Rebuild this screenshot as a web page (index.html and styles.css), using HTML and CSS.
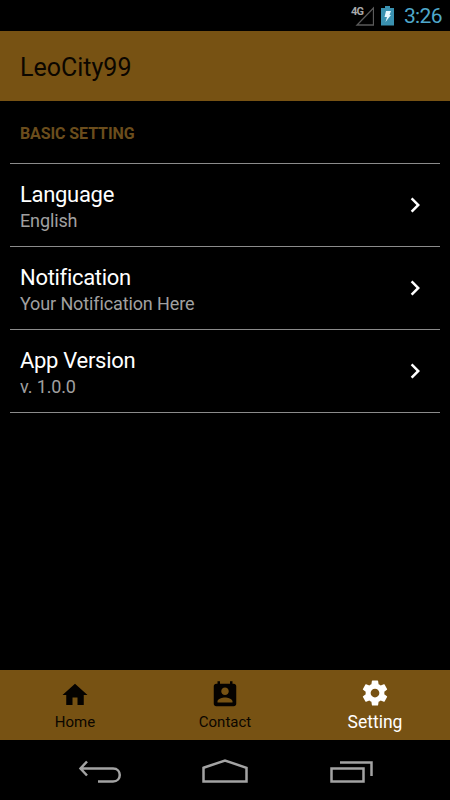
FILE: index.html
```html
<!DOCTYPE html>
<html lang="en">
<head>
<meta charset="utf-8">
<title>LeoCity99</title>
<link rel="stylesheet" href="styles.css">
</head>
<body>
<div class="phone">
  <div class="status">
    <svg class="signal" width="24" height="24" viewBox="0 0 24 24"><path d="M23.500 4v17H7z" fill="none" stroke="#5a5a5a" stroke-width="1.300"/><text x="1" y="10.500" class="net">4G</text></svg>
    <svg class="battery" width="13" height="20" viewBox="0 0 13 20"><path d="M4 0h5v2h4v17.500H0V2h4z" fill="#3a91b0"/><path d="M5 5h5L8.500 9H10l-5.500 7 1.500-5H3.500z" fill="#e8f8ff"/></svg>
    <span class="clock">3:26</span>
  </div>
  <header class="bar"><h1>LeoCity99</h1></header>
  <main>
    <h2>BASIC SETTING</h2>
    <div class="row"><div><p class="title">Language</p><p class="sub">English</p></div><svg width="30" height="30" viewBox="0 0 24 24"><path d="M10 6 8.590 7.410 13.170 12l-4.580 4.590L10 18l6-6z"/></svg></div>
    <div class="row"><div><p class="title">Notification</p><p class="sub">Your Notification Here</p></div><svg width="30" height="30" viewBox="0 0 24 24"><path d="M10 6 8.590 7.410 13.170 12l-4.580 4.590L10 18l6-6z"/></svg></div>
    <div class="row"><div><p class="title">App Version</p><p class="sub">v. 1.0.0</p></div><svg width="30" height="30" viewBox="0 0 24 24"><path d="M10 6 8.590 7.410 13.170 12l-4.580 4.590L10 18l6-6z"/></svg></div>
  </main>
  <nav class="tabs">
    <div class="tab"><svg width="30" height="30" viewBox="0 0 24 24"><path d="M10 20v-6h4v6h5v-8h3L12 3 2 12h3v8z"/></svg><span>Home</span></div>
    <div class="tab"><svg width="30" height="30" viewBox="0 0 24 24"><path d="M19 3h-1V1h-2v2H8V1H6v2H5c-1.110 0-2 .9-2 2v14c0 1.100.89 2 2 2h14c1.100 0 2-.9 2-2V5c0-1.100-.9-2-2-2zm-7 3c1.660 0 3 1.340 3 3s-1.340 3-3 3-3-1.340-3-3 1.340-3 3-3zm6 12H6v-1c0-2 4-3.100 6-3.100s6 1.100 6 3.100v1z"/></svg><span>Contact</span></div>
    <div class="tab active"><svg width="30" height="30" viewBox="0 0 24 24"><path d="M19.430 12.980c.04-.32.07-.64.07-.98s-.03-.66-.07-.98l2.110-1.650c.19-.15.24-.42.12-.64l-2-3.460c-.12-.22-.39-.3-.61-.22l-2.490 1c-.52-.4-1.080-.73-1.690-.98l-.38-2.650C14.460 2.180 14.250 2 14 2h-4c-.25 0-.46.18-.49.42l-.38 2.650c-.61.25-1.170.59-1.690.98l-2.490-1c-.23-.09-.49 0-.61.22l-2 3.460c-.13.22-.07.49.12.64l2.110 1.650c-.04.32-.07.65-.07.98s.03.66.07.98l-2.110 1.650c-.19.15-.24.42-.12.64l2 3.460c.12.22.39.3.61.22l2.490-1c.52.4 1.080.73 1.690.98l.38 2.650c.03.24.24.42.49.42h4c.25 0 .46-.18.49-.42l.38-2.650c.61-.25 1.170-.59 1.690-.98l2.490 1c.23.09.49 0 .61-.22l2-3.460c.12-.22.07-.49-.12-.64zM12 15.500c-1.930 0-3.500-1.570-3.500-3.500s1.570-3.500 3.500-3.500 3.500 1.570 3.500 3.500-1.570 3.500-3.500 3.500z"/></svg><span>Setting</span></div>
  </nav>
  <div class="keys">
    <svg width="50" height="30" viewBox="0 0 50 30"><path d="M5.500 13.500H38c9 0 9 13 0 13H23M12 6.500 5.500 13.500l6.500 7"/></svg>
    <svg width="50" height="30" viewBox="0 0 50 30"><path d="M3.500 12.800 25 5.500l21.500 7.300v13.700H3.500z"/></svg>
    <svg width="50" height="30" viewBox="0 0 50 30"><path d="M6.500 13.500h32v13h-32zM15 7.500h31.500V21"/></svg>
  </div>
</div>
</body>
</html>
```
FILE: styles.css
```css
* { box-sizing: border-box; }
body { margin: 0; background: #000; font-family: Roboto, sans-serif; }
h1, h2, p { margin: 0; font-weight: 400; }
.phone { width: 450px; height: 800px; display: flex; flex-direction: column; background: #000; }
.status { height: 31px; display: flex; justify-content: flex-end; align-items: center; padding-right: 8px; }
.signal { margin-right: 7px; }
.net { font-size: 11px; font-weight: 700; fill: #aaa; font-family: Roboto, sans-serif; letter-spacing: -0.9px; }
.battery { margin-right: 9.5px; }
.clock { font-size: 21px; line-height: 31px; letter-spacing: -0.6px; color: #4fa8cb; padding-top: 2px; }
.bar { height: 70px; background: #775213; padding: 2px 20px 0; }
.bar h1 { font-size: 25px; line-height: 70px; color: #0b0600; }
main { flex: 1; padding: 0 10px; }
h2 { height: 63px; padding: 0 10px; border-bottom: 1px solid #8b8b8b; font-size: 16px; line-height: 66px; letter-spacing: -0.1px; font-weight: 700; color: #6b4d1c; }
.row { height: 83px; padding: 0 10px; border-bottom: 1px solid #8b8b8b; display: flex; justify-content: space-between; align-items: center; fill: #fff; }
.title { font-size: 22px; line-height: 28px; padding-top: 3px; letter-spacing: -0.3px; color: #fff; }
.sub { font-size: 18px; line-height: 24px; letter-spacing: -0.12px; color: #a0a0a0; }
.tabs { height: 70px; display: flex; background: #775213; }
.tab { flex: 1; display: flex; flex-direction: column; align-items: center; padding-top: 10px; font-size: 15px; line-height: 25px; color: #0b0600; fill: #050200; }
.active { padding-top: 7.5px; font-size: 17.5px; line-height: 29px; color: #fff; fill: #fff; }
.keys { height: 60px; padding: 15px 75px 0; display: flex; justify-content: space-between; align-items: flex-start; fill: none; stroke: #a3a3a3; stroke-width: 2.5; }
```
